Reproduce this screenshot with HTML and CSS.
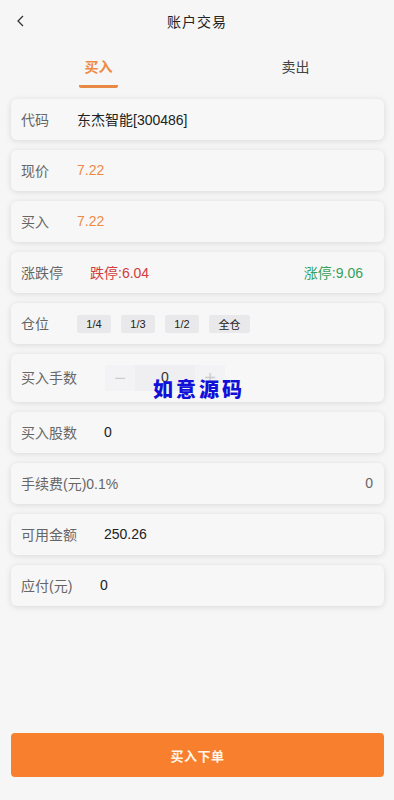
FILE: index.html
```html
<!DOCTYPE html>
<html lang="zh">
<head>
<meta charset="utf-8">
<link rel="stylesheet" href="styles.css">
</head>
<body>
<div class="page">
  <header class="nav">
    <span class="back"><svg width="12" height="14" viewBox="0 0 12 14"><path d="M8 2 L3 7 L8 12" fill="none" stroke="#333" stroke-width="1.3"/></svg></span>
    <span class="title">账户交易</span>
  </header>
  <div class="tabs">
    <div class="tab active"><span>买入</span></div>
    <div class="tab"><span>卖出</span></div>
  </div>
  <div class="list">
    <div class="card"><span class="label">代码</span><span class="val dark">东杰智能[300486]</span></div>
    <div class="card"><span class="label">现价</span><span class="val orange">7.22</span></div>
    <div class="card"><span class="label">买入</span><span class="val orange">7.22</span></div>
    <div class="card"><span class="label">涨跌停</span><span class="val red">跌停:6.04</span><span class="val green right">涨停:9.06</span></div>
    <div class="card"><span class="label">仓位</span>
      <div class="chips"><span class="chip">1/4</span><span class="chip">1/3</span><span class="chip">1/2</span><span class="chip wide">全仓</span></div>
    </div>
    <div class="card tall"><span class="label">买入手数</span>
      <div class="stepper"><span class="step">−</span><span class="num">0</span><span class="step">+</span></div>
      <span class="mark">如意源码</span>
    </div>
    <div class="card"><span class="label">买入股数</span><span class="val dark v2">0</span></div>
    <div class="card"><span class="label">手续费(元)0.1%</span><span class="val gray right2">0</span></div>
    <div class="card"><span class="label">可用金额</span><span class="val dark v2">250.26</span></div>
    <div class="card"><span class="label">应付(元)</span><span class="val dark v3">0</span></div>
  </div>
  <div class="spacer"></div>
  <div class="footer"><button class="submit">买入下单</button></div>
</div>
</body>
</html>
```
FILE: styles.css
```css
* { box-sizing: border-box; }
html, body { margin: 0; padding: 0; }
body {
  background: #f6f6f6;
  font-family: "Liberation Sans", "Noto Sans CJK SC", sans-serif;
  color: #333;
}
.page {
  width: 394px;
  height: 800px;
  display: flex;
  flex-direction: column;
}
.nav {
  height: 42px;
  position: relative;
  display: flex;
  align-items: center;
  justify-content: center;
}
.back {
  position: absolute;
  left: 15px;
  top: 14px;
  display: flex;
}
.title {
  font-size: 14px;
  color: #222;
  letter-spacing: 1px;
  margin-top: -1px;
}
.tabs {
  display: flex;
  height: 48px;
}
.tab {
  flex: 1;
  display: flex;
  justify-content: center;
}
.tab span {
  font-size: 14px;
  color: #444;
  padding-top: 14px;
  height: 46px;
}
.tab.active span {
  color: #ee8a45;
  font-weight: bold;
  border-bottom: 3px solid #e88a45;
  border-radius: 0 0 2px 2px;
  width: 39px;
  text-align: center;
}
.list {
  padding: 9px 10px 0 11px;
  display: flex;
  flex-direction: column;
  gap: 10px;
}
.card {
  height: 41px;
  background: #f7f7f7;
  border-radius: 6px;
  box-shadow: 0 1px 6px rgba(0,0,0,0.12);
  display: flex;
  align-items: center;
  padding: 0 11px 2px 10px;
  font-size: 14px;
  position: relative;
}
.card.tall { height: 48px; }
.label {
  color: #666;
  width: 56px;
  white-space: nowrap;
}
.val { white-space: nowrap; }
.dark { color: #222; }
.orange { color: #ee8a45; }
.red { color: #d23c3c; margin-left: 13px; }
.green { color: #35a05a; }
.gray { color: #666; }
.right { margin-left: auto; margin-right: 10px; }
.right2 { margin-left: auto; }
.v2 { margin-left: 27px; }
.v3 { margin-left: 23px; }
.chips {
  display: flex;
  gap: 10px;
  margin-top: 2px;
}
.chip {
  height: 18px;
  width: 34px;
  background: #e9e9ec;
  border-radius: 2px;
  font-size: 11px;
  color: #222;
  display: flex;
  align-items: center;
  justify-content: center;
}
.chip.wide { width: 41px; }
.stepper {
  display: flex;
  height: 26px;
  margin-left: 28px;
  margin-top: 2px;
}
.step {
  width: 30px;
  background: #f3f3f5;
  color: #ccc;
  font-size: 20px;
  display: flex;
  align-items: center;
  justify-content: center;
  line-height: 1;
}
.num {
  width: 60px;
  background: #efeff2;
  color: #333;
  font-size: 14px;
  text-align: center;
  line-height: 1;
  padding-top: 5px;
}
.mark {
  position: absolute;
  left: 142px;
  top: 25px;
  font-size: 20px;
  font-weight: 900;
  color: #1010d8;
  letter-spacing: 3px;
  font-family: "Noto Sans CJK SC", sans-serif;
  line-height: 1;
}
.spacer { flex: 1; }
.footer {
  padding: 0 10px 23px 11px;
}
.submit {
  width: 100%;
  height: 44px;
  border: none;
  border-radius: 4px;
  background: #f77f2d;
  color: #fff6ea;
  font-size: 13px;
  font-weight: bold;
  font-family: "Noto Sans CJK SC", sans-serif;
  letter-spacing: 0.5px;
}
```
